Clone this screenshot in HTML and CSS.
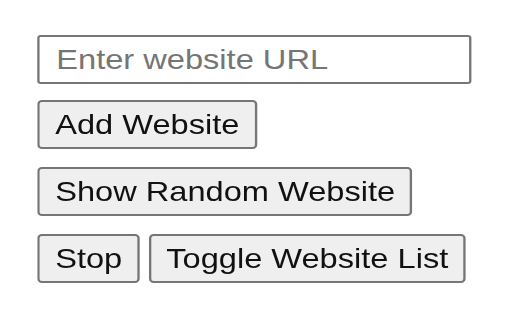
FILE: index.html
```html
<!DOCTYPE html>
<html lang="en">
<head>
<meta charset="utf-8">
<title>Random Website</title>
<link rel="stylesheet" href="styles.css">
</head>
<body>
<div class="app">
  <input class="url" type="text" placeholder="Enter website URL">
  <div class="row"><button class="btn">Add Website</button></div>
  <div class="row"><button class="btn">Show Random Website</button></div>
  <div class="row pair"><button class="btn">Stop</button><button class="btn">Toggle Website List</button></div>
</div>
</body>
</html>
```

FILE: styles.css
```css
html, body {
  margin: 0;
  background: #ffffff;
  overflow: hidden;
}

.app {
  width: 420px;
  transform: scaleX(1.164);
  transform-origin: 0 0;
  padding: 35px 0 0 32.4px;
  display: flex;
  flex-direction: column;
  align-items: flex-start;
  font-family: "Liberation Sans", Arial, sans-serif;
}

.url {
  width: 373px;
  height: 49px;
  box-sizing: border-box;
  margin: 0 0 16px 0;
  border: 2px solid #767676;
  border-radius: 3px;
  padding: 0 0 0 14px;
  font: 28px "Liberation Sans", Arial, sans-serif;
  color: #111;
  background: #fff;
  outline: none;
}

.url::placeholder {
  color: #757575;
}

.row {
  display: flex;
  gap: 7.8px;
  margin-bottom: 18px;
}

.btn {
  height: 49px;
  box-sizing: border-box;
  margin: 0;
  border: 2px solid #767676;
  border-radius: 4px;
  background: #efefef;
  padding: 0 13px;
  font: 28px "Liberation Sans", Arial, sans-serif;
  color: #111;
}
```
